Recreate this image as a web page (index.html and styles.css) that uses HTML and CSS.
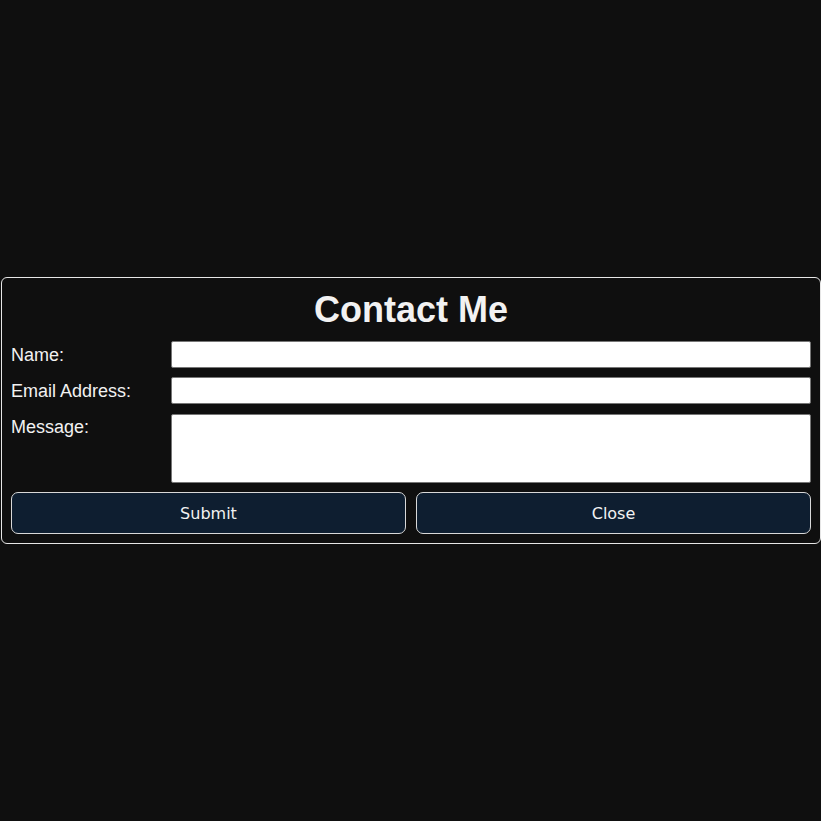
FILE: index.html
```html
<!DOCTYPE html>
<html>
<head>
<meta charset="utf-8">
<link rel="stylesheet" href="styles.css">
</head>
<body>
<div class="page">
  <form class="dialog">
    <h2 class="title">Contact Me</h2>
    <div class="fields">
      <label class="label" for="name">Name:</label>
      <input class="input" id="name" type="text">
      <label class="label" for="email">Email Address:</label>
      <input class="input" id="email" type="email">
      <label class="label" for="msg">Message:</label>
      <textarea class="input area" id="msg"></textarea>
    </div>
    <div class="actions">
      <button class="btn" type="button">Submit</button>
      <button class="btn" type="button">Close</button>
    </div>
  </form>
</div>
</body>
</html>
```
FILE: styles.css
```css
html, body {
  margin: 0;
  padding: 0;
  background: #0f0f0f;
}
.page {
  height: 821px;
  display: flex;
  align-items: center;
  padding-left: 1px;
}
.dialog {
  width: 800px;
  padding: 13px 9px 9px;
  border: 1px solid #e6e6e6;
  border-radius: 6px;
  background: #0f0f0f;
  color: #f2f2f2;
  font-family: "Liberation Sans", Arial, sans-serif;
}
.title {
  margin: 0 0 13px;
  text-align: center;
  font-size: 36px;
  line-height: 37px;
  font-weight: bold;
}
.fields {
  display: grid;
  grid-template-columns: 160px 1fr;
  row-gap: 9px;
}
.label {
  padding-top: 1px;
  font-size: 18px;
  line-height: 26px;
}
.input {
  box-sizing: border-box;
  height: 27px;
  margin: 0;
  border: 1px solid #767676;
  border-radius: 2px;
  background: #fff;
}
.area {
  height: 69px;
  margin-top: 1px;
  resize: none;
}
.actions {
  display: grid;
  grid-template-columns: 1fr 1fr;
  column-gap: 10px;
  margin-top: 9px;
}
.btn {
  height: 42px;
  margin: 0;
  border: 1px solid #d8d8d8;
  border-radius: 7px;
  background: #0e1e30;
  color: #f2f2f2;
  font-family: "DejaVu Sans", sans-serif;
  font-size: 16px;
}
```
